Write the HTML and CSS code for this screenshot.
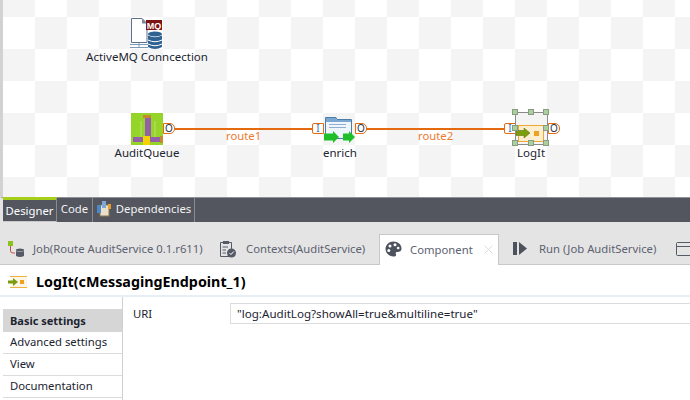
FILE: index.html
```html
<!DOCTYPE html>
<html lang="en">
<head>
<meta charset="utf-8">
<title>AuditService route</title>
<link rel="stylesheet" href="styles.css">
</head>
<body>
<div class="app">
  <section class="canvas">
    <div class="link link-one"></div>
    <div class="link link-two"></div>
    <span class="route route-one">route1</span>
    <span class="route route-two">route2</span>

    <div class="node node-mq">
      <svg class="node-icon" width="34" height="34" viewBox="0 0 34 34">
        <path d="M1.500 1.500H12L17 6.500V25.500H1.500Z" fill="#fff" stroke="#5f708c"/>
        <path d="M12 1.500V6.500H17Z" fill="#7d8798"/>
        <path d="M0 27.500H18M0 30.500H18M9 26V30" stroke="#7f9ab8" fill="none"/>
        <rect x="16" y="3" width="16" height="10" fill="#7d1212"/>
        <text x="24" y="11.500" class="mq-text">MQ</text>
        <ellipse cx="25" cy="17" rx="7" ry="2.500" fill="#2f6291"/>
        <path d="M18 18.500V30Q25 34 32 30V18.500Q25 22 18 18.500Z" fill="#2f6291"/>
        <path d="M18 23Q25 26.500 32 23M18 27Q25 30.500 32 27" stroke="#fff" fill="none"/>
      </svg>
      <span class="node-label">ActiveMQ Conncection</span>
    </div>

    <div class="node node-queue">
      <svg class="node-icon" width="32" height="32" viewBox="0 0 32 32">
        <rect width="32" height="32" fill="#95d529"/>
        <path d="M10 8V24M24 8V24" stroke="#b9e070" fill="none"/>
        <rect x="14" y="3" width="6" height="23" fill="#9460a8"/>
        <rect x="12" y="2" width="8" height="3" fill="#c48a2c"/>
        <rect x="2" y="24" width="28" height="5" fill="#9460a8"/>
        <rect x="12" y="23" width="7" height="9" fill="#f6d200"/>
        <rect x="29" y="23" width="3" height="7" fill="#c48a2c"/>
      </svg>
      <span class="node-label">AuditQueue</span>
    </div>

    <div class="node node-enrich">
      <svg class="node-icon" width="32" height="32" viewBox="0 0 32 32">
        <path d="M1.500 3.500H12L13 5.500H27.500V24.500H1.500Z" fill="#eef5fc" stroke="#4d7da8"/>
        <path d="M2 4H12L13 6H27V8H2Z" fill="#7aa6d2"/>
        <path d="M5 10.500H22M5 13.500H22" stroke="#8fb0d4" fill="none"/>
        <path d="M0 19.500H9V17L15 23L9 29V26.500H0Z" fill="#1fbf2a"/>
        <path d="M19 19.500H25V17L31 23L25 29V26.500H19Z" fill="#1fbf2a"/>
      </svg>
      <span class="node-label">enrich</span>
    </div>

    <div class="node node-log">
      <svg class="node-icon" width="32" height="32" viewBox="0 0 32 32">
        <rect x="3.500" y="12.500" width="25" height="16" fill="#fdeed2" stroke="#f0a830"/>
        <rect x="19" y="18" width="5" height="5" fill="#f0a020"/>
        <path d="M1 17.500H9V15L15 20L9 25V22.500H1Z" fill="#7c9c10" stroke="#5f7a08" stroke-width=".6"/>
      </svg>
      <span class="node-label">LogIt</span>
    </div>

    <span class="port port-o port-queue">O</span>
    <span class="port port-i port-enrich-in">I</span>
    <span class="port port-o port-enrich-out">O</span>
    <span class="port port-i port-log-in">I</span>
    <span class="port port-o port-log-out">O</span>

    <div class="selection">
      <i class="handle h-tl"></i><i class="handle h-tc"></i><i class="handle h-tr"></i>
      <i class="handle h-ml"></i><i class="handle h-mr"></i>
      <i class="handle h-bl"></i><i class="handle h-bc"></i><i class="handle h-br"></i>
    </div>
  </section>

  <nav class="view-tabs">
    <span class="view-tab view-tab-active">Designer</span>
    <span class="view-tab view-tab-code">Code</span>
    <span class="view-tab view-tab-deps">
      <svg width="16" height="16" viewBox="0 0 16 16">
        <rect x="4" y="4" width="9" height="11" fill="#e8e0c8" stroke="#8a7a50"/>
        <rect x="1" y="4" width="4" height="8" fill="#4f86c6"/>
        <rect x="6" y="0" width="4" height="7" fill="#7fa8d8"/>
        <rect x="12" y="3" width="3" height="5" fill="#e3a02c"/>
      </svg>
      Dependencies
    </span>
  </nav>

  <nav class="panel-tabs">
    <span class="panel-tab tab-job">
      <svg width="16" height="16" viewBox="0 0 16 16">
        <rect x="0" y="0" width="5" height="5" fill="#8cc21f"/>
        <path d="M2.500 5V10Q2.500 12 5 12H7" stroke="#c0504d" fill="none"/>
        <ellipse cx="12" cy="9" rx="4" ry="1.500" fill="#555b66"/>
        <path d="M8 10V15Q12 17 16 15V10Q12 12 8 10Z" fill="#555b66"/>
      </svg>
      Job(Route AuditService 0.1.r611)
    </span>
    <span class="panel-tab tab-contexts">
      <svg width="18" height="18" viewBox="0 0 18 18">
        <path d="M1.500 2.500H12.500V16.500H1.500Z" fill="none" stroke="#555b66"/>
        <rect x="4" y="1" width="6" height="3" fill="#555b66"/>
        <path d="M3.500 7H9M3.500 10H7M3.500 13H7" stroke="#555b66" fill="none"/>
        <circle cx="12.500" cy="13" r="4.500" fill="#555b66"/>
        <path d="M10.500 13L12 14.500L14.800 11.500" stroke="#fff" fill="none"/>
      </svg>
      Contexts(AuditService)
    </span>
    <span class="panel-tab panel-tab-active">
      <svg width="17" height="16" viewBox="0 0 17 16">
        <path d="M8.500 0.500C13 0.500 16.500 3.500 16.500 7.500C16.500 11 13 11 12 11C10.500 11 10.500 12.500 11 13.500C11.500 15 10 15.500 8.500 15.500C4 15.500 0.500 12 0.500 8C0.500 4 4 0.500 8.500 0.500Z" fill="#4d525c"/>
        <circle cx="5" cy="5" r="1.500" fill="#fff"/>
        <circle cx="10" cy="3.800" r="1.500" fill="#fff"/>
        <circle cx="3.800" cy="9.500" r="1.500" fill="#fff"/>
        <circle cx="13.200" cy="7" r="1.300" fill="#fff"/>
      </svg>
      <span class="tab-text">Component</span>
      <svg class="tab-close" width="9" height="9" viewBox="0 0 9 9">
        <path d="M0.500 0.500L8.500 8.500M8.500 0.500L0.500 8.500" stroke="#dcdcdc" fill="none"/>
      </svg>
    </span>
    <span class="panel-tab tab-run">
      <svg width="14" height="13" viewBox="0 0 14 13">
        <rect x="0" y="0" width="4" height="13" fill="#4d525c"/>
        <path d="M6 0L14 6.500L6 13Z" fill="#4d525c"/>
      </svg>
      Run (Job AuditService)
    </span>
    <span class="panel-tab tab-window">
      <svg width="15" height="14" viewBox="0 0 15 14">
        <rect x="0.500" y="0.500" width="20" height="13" rx="1" fill="none" stroke="#555b66"/>
        <path d="M1 4.500H15" stroke="#555b66"/>
      </svg>
    </span>
  </nav>

  <header class="component-title">
    <svg width="20" height="12" viewBox="0 0 20 12">
      <path d="M2 0.500H19M2 11.500H19" stroke="#f0b040" fill="none"/>
      <rect x="3" y="1" width="16" height="10" fill="#fdf6e6"/>
      <rect x="12" y="4" width="4" height="4" fill="#f0a020"/>
      <path d="M0 4.500H5V2L10 6L5 10V7.500H0Z" fill="#7c9c10"/>
    </svg>
    <h1 class="title-text">LogIt(cMessagingEndpoint_1)</h1>
  </header>

  <main class="settings">
    <ul class="side-menu">
      <li class="side-item side-item-active">Basic settings</li>
      <li class="side-item">Advanced settings</li>
      <li class="side-item">View</li>
      <li class="side-item">Documentation</li>
    </ul>
    <form class="uri-form">
      <label class="uri-label" for="uri">URI</label>
      <input class="uri-input" id="uri" type="text" value="&quot;log:AuditLog?showAll=true&amp;multiline=true&quot;">
    </form>
  </main>
</div>
</body>
</html>
```

FILE: styles.css
```css
* { box-sizing: border-box; }

html, body {
  margin: 0;
  padding: 0;
  width: 690px;
  height: 400px;
  overflow: hidden;
  background: #fff;
}

body {
  font-family: "Noto Sans", "Open Sans", sans-serif;
  font-size: 11.3px;
  color: #1c2430;
}

.app {
  display: flex;
  flex-direction: column;
  height: 400px;
}

/* Diagram canvas */
.canvas {
  position: relative;
  height: 197px;
  flex: none;
  overflow: hidden;
  background-color: #fff;
  background-image: conic-gradient(#f4f4f4 25%, #fff 25% 50%, #f4f4f4 50% 75%, #fff 75%);
  background-size: 64px 64px;
  background-position: 3px 17px;
  background-origin: border-box;
  border-left: 3px solid #d2d2d2;
}

.link {
  position: absolute;
  top: 128px;
  height: 2px;
  background: #e46a10;
}
.link-one { left: 172px; width: 138px; }
.link-two { left: 363px; width: 139px; }

.route {
  position: absolute;
  top: 128px;
  color: #ee7a30;
  line-height: 16px;
}
.route-one { left: 223px; }
.route-two { left: 415px; }

.node {
  position: absolute;
  display: flex;
  flex-direction: column;
  align-items: center;
  width: 130px;
}
.node-icon { display: block; flex: none; }
.node-label { font-size: 11.5px; line-height: 16px; white-space: nowrap; }

.node-mq { left: 79px; top: 17px; }
.node-mq .node-label { margin-top: -2px; }
.node-queue { left: 79px; top: 113px; }
.node-enrich { left: 272px; top: 114px; }
.node-enrich .node-label { margin-top: -1px; }
.node-log { left: 463px; top: 113px; }

.mq-text {
  font-family: "Liberation Sans", sans-serif;
  font-size: 9px;
  font-weight: 700;
  fill: #fff;
  text-anchor: middle;
}

.port {
  position: absolute;
  top: 123px;
  width: 12px;
  height: 11px;
  border: 1px solid #e46a10;
  background: #fff;
  font-size: 10px;
  line-height: 9px;
  text-align: center;
  color: #26334a;
}
.port-o { border-radius: 0 5px 5px 0; }
.port-i { border-radius: 2px 0 0 2px; color: #3b6fb0; }
.port-queue { left: 160px; }
.port-enrich-in { left: 309px; }
.port-enrich-out { left: 352px; }
.port-log-in { left: 501px; }
.port-log-out { left: 545px; }

.selection {
  position: absolute;
  left: 512px;
  top: 112px;
  width: 33px;
  height: 33px;
  border: 1px solid #8a8a8a;
}
.handle {
  position: absolute;
  width: 6px;
  height: 6px;
  background: #a9cf9b;
  border: 1px solid #8a9a85;
}
.h-tl { left: -4px; top: -4px; }
.h-tc { left: 12px; top: -4px; }
.h-tr { left: 27px; top: -4px; }
.h-ml { left: -4px; top: 12px; }
.h-mr { left: 27px; top: 12px; }
.h-bl { left: -4px; top: 27px; }
.h-bc { left: 12px; top: 27px; }
.h-br { left: 27px; top: 27px; }

/* Designer / Code / Dependencies */
.view-tabs {
  display: flex;
  flex: none;
  height: 25px;
  background: #53565f;
  border-top: 1px solid #8f9196;
  border-left: 3px solid #e4e4e4;
}
.view-tab {
  display: flex;
  align-items: center;
  justify-content: center;
  gap: 4px;
  padding-bottom: 3px;
  color: #f2f2f2;
  border-right: 1px solid #888b92;
}
.view-tab-active {
  width: 54px;
  margin-top: -1px;
  padding-bottom: 0;
  color: #fff;
  border-top: 3px solid #a6cf1a;
  border-bottom: 1px solid #c9c9c9;
}
.view-tab-code { width: 36px; }
.view-tab-deps { width: 102px; }

/* Panel tabs */
.panel-tabs {
  display: flex;
  flex: none;
  height: 43px;
  padding-top: 12px;
  background: #e4e4e4;
  border-bottom: 1px solid #c8c8c8;
  white-space: nowrap;
}
.panel-tab {
  display: flex;
  align-items: center;
  gap: 8px;
  height: 31px;
  padding-bottom: 2px;
  color: #5c6270;
  flex: none;
}
.tab-job { width: 210px; padding-left: 8px; gap: 9px; }
.tab-contexts { width: 169px; padding-left: 9px; gap: 9px; }
.panel-tab-active {
  width: 120px;
  padding-left: 5px;
  background: #fff;
  border: 1px solid #c8c8c8;
  border-bottom: 0;
  gap: 8px;
}
.tab-text { flex: none; }
.tab-close { flex: none; margin-left: 3px; }
.tab-run { width: 164px; padding-left: 14px; gap: 12px; }
.tab-window { padding-left: 13px; }

/* Component title */
.component-title {
  display: flex;
  align-items: center;
  flex: none;
  gap: 8px;
  height: 32px;
  padding: 3px 0 0 8px;
  background: #fff;
  border-bottom: 2px solid #e6eff6;
}
.title-text {
  margin: 0;
  font-size: 14.3px;
  font-weight: 700;
  color: #000;
}

/* Settings */
.settings {
  display: flex;
  flex: 1;
  min-height: 0;
  padding-left: 3px;
  background: #fff;
}
.side-menu {
  width: 120px;
  margin: 0;
  padding: 12px 0 0;
  list-style: none;
  border-right: 1px solid #d0d0d0;
  flex: none;
}
.side-item {
  height: 22px;
  padding-left: 7px;
  line-height: 19px;
  border-bottom: 1px solid #dcdcdc;
}
.side-item-active {
  height: 23px;
  background: #d6d6d6;
  font-size: 11px;
  font-weight: 700;
  border-bottom: 0;
  line-height: 23px;
}
.uri-form {
  display: flex;
  flex: 1;
  align-items: flex-start;
  min-width: 0;
  padding-top: 6px;
}
.uri-label {
  width: 107px;
  padding: 2px 0 0 10px;
  line-height: 17px;
  flex: none;
}
.uri-input {
  flex: none;
  width: 470px;
  height: 21px;
  margin: 0;
  padding: 0 6px;
  font: inherit;
  font-size: 11.6px;
  color: #1c2430;
  background: #fff;
  border: 1px solid #dcdcdc;
  border-right: 0;
  outline: 0;
}
```
